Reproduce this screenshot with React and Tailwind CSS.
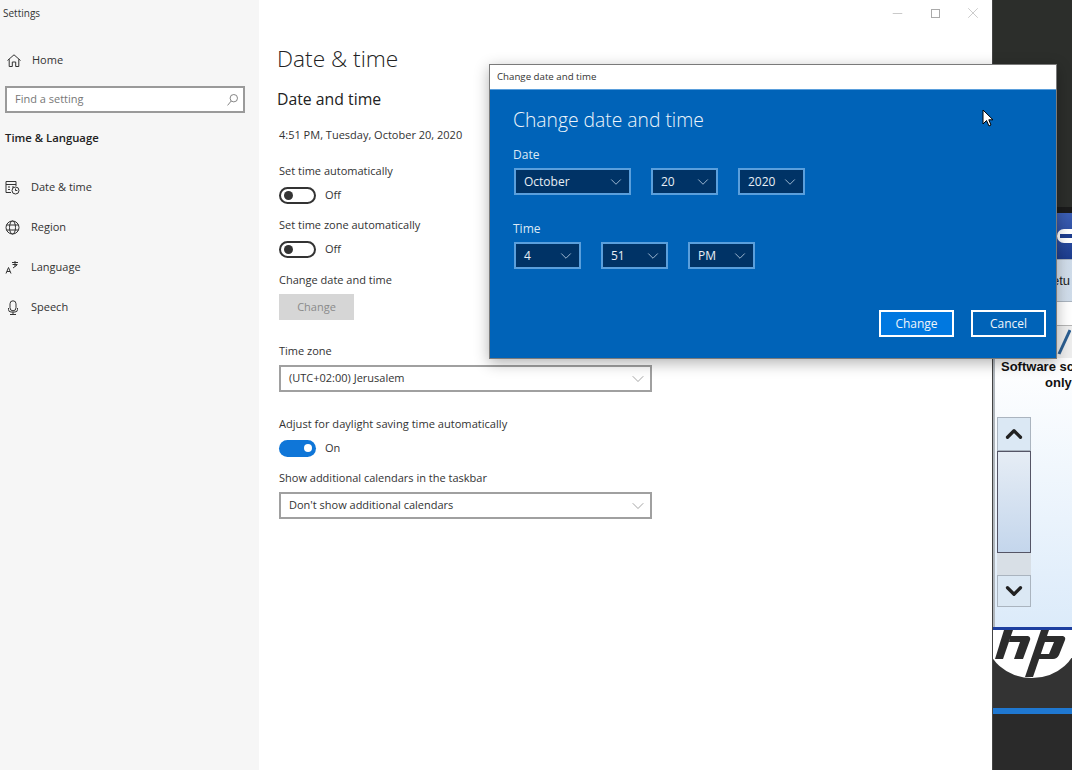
import React from "react";
import { ChevronDown, ChevronUp, Minus, X } from "lucide-react";

const font = "font-['Open_Sans','Liberation_Sans',sans-serif]";

function Toggle({ on, label }) {
  return (
    <div className="flex items-center gap-[9px] h-[18px]">
      <div className={on ? "w-[37px] h-[17px] rounded-full bg-[#0f76d8] flex items-center justify-end pr-[4px]" : "w-[37px] h-[17px] rounded-full border-2 border-[#333] flex items-center pl-[3px]"}>
        <div className={on ? "w-[8px] h-[8px] rounded-full bg-white" : "w-[9px] h-[9px] rounded-full bg-[#333]"} />
      </div>
      <span className="text-[11px] text-[#333]">{label}</span>
    </div>
  );
}

function Select({ text }) {
  return (
    <div className="w-[373px] h-[27px] border-2 border-[#a0a0a0] bg-white flex items-center justify-between pl-[8px] pr-[2px] text-[11px] text-[#333]">
      <span>{text}</span>
      <ChevronDown size={20} strokeWidth={0.8} className="text-[#777]" />
    </div>
  );
}

function NavItem({ icon, label, pad = "pl-[5px]" }) {
  return (
    <div className={`flex items-center h-[40px] ${pad} gap-[11px] text-[#333] text-[11px]`}>
      <span className="w-[15px] h-[15px] flex items-center justify-center">{icon}</span>
      <span>{label}</span>
    </div>
  );
}

function DSelect({ text, w }) {
  return (
    <div className={`${w} h-[27px] border-2 border-[#5a9fdc] bg-[#003366] flex items-center justify-between pl-[8px] pr-[4px] text-[12px] text-[#e8eef5]`}>
      <span>{text}</span>
      <ChevronDown size={18} strokeWidth={1} className="text-[#cfe0f0]" />
    </div>
  );
}

const ic = { fill: "none", stroke: "#333", strokeWidth: 1 };

export default function App() {
  return (
    <div className={`relative w-[1072px] h-[770px] overflow-hidden flex bg-white ${font}`}>
      {/* Sidebar */}
      <aside className="w-[259px] shrink-0 bg-[#f6f6f6] flex flex-col">
        <div className="h-[28px] pl-[3px] pt-[6px] text-[10px] text-[#333] leading-[15px]">Settings</div>
        <div className="mt-[12px]">
          <NavItem
            label="Home"
            pad="pl-[6px]"
            icon={
              <svg width="14" height="13" viewBox="0 0 14 13" {...ic}>
                <path d="M0.5 6.5 L7 0.8 L13.5 6.5 M2.2 5.2 V12.5 H5.3 V8 H8.7 V12.5 H11.8 V5.2" />
              </svg>
            }
          />
        </div>
        <div className="mx-[5px] mt-[6px] w-[240px] h-[27px] border-2 border-[#9a9a9a] bg-white flex items-center justify-between pl-[8px] pr-[5px] text-[11px] text-[#777]">
          <span>Find a setting</span>
          <svg width="11" height="12" viewBox="0 0 11 12" fill="none" stroke="#777" strokeWidth="0.9">
            <circle cx="6.8" cy="4.2" r="3.7" />
            <path d="M4.2 7 L0.6 11.4" />
          </svg>
        </div>
        <div className="pl-[5px] mt-[15px] h-[20px] leading-[20px] text-[11.3px] font-semibold text-[#222]">Time &amp; Language</div>
        <div className="mt-[19px]">
          <NavItem
            label="Date & time"
            icon={
              <svg width="15" height="15" viewBox="0 0 15 15" {...ic}>
                <path d="M6 12.5 H1 V1.5 H11 V6 M1 4.5 H11 M3 7 H5 M7 7 H9 M3 9.5 H5" />
                <circle cx="10.5" cy="10.5" r="3.5" />
                <path d="M10.5 8.5 V10.5 H12.3" />
              </svg>
            }
          />
          <NavItem
            label="Region"
            icon={
              <svg width="15" height="15" viewBox="0 0 15 15" {...ic}>
                <circle cx="7.5" cy="7.5" r="6.5" />
                <ellipse cx="7.5" cy="7.5" rx="3" ry="6.5" />
                <path d="M1.5 5 H13.5 M1.5 10 H13.5" />
              </svg>
            }
          />
          <NavItem
            label="Language"
            icon={
              <svg width="15" height="15" viewBox="0 0 15 15" {...ic}>
                <path d="M1 13.5 L3.5 7.5 L6 13.5 M2 11.5 H5 M7 2.5 H13 M10 1 V6.5 M7.5 4.5 H12.5 M8 8 L12 5" />
              </svg>
            }
          />
          <NavItem
            label="Speech"
            icon={
              <svg width="14" height="15" viewBox="0 0 14 15" {...ic}>
                <rect x="4" y="0.8" width="6" height="10" rx="3" />
                <path d="M2.5 8 V9.5 Q2.5 12 5 12 H9 Q11.5 12 11.5 9.5 V8 M7 12 V14.5 M4 14.5 H10" />
              </svg>
            }
          />
        </div>
      </aside>

      {/* Main */}
      <main className="w-[733px] shrink-0 bg-white relative pl-[18px] text-[#333]">
        <div className="absolute top-0 right-0 flex items-center text-[#aaa]">
          <div className="w-[38px] h-[26px] flex items-center justify-center"><Minus size={15} strokeWidth={1} /></div>
          <div className="w-[38px] h-[26px] flex items-center justify-center"><div className="w-[9px] h-[9px] border border-[#aaa]" /></div>
          <div className="w-[38px] h-[26px] flex items-center justify-center"><X size={18} strokeWidth={0.8} /></div>
        </div>
        <h1 className="mt-[42px] h-[34px] text-[22.7px] leading-[34px] font-light text-[#222]">Date &amp; time</h1>
        <h2 className="mt-[11px] h-[24px] text-[15.8px] leading-[24px] text-[#222]">Date and time</h2>
        <div className="ml-[2px] mt-[15px] h-[17px] text-[11px] leading-[17px]">4:51 PM, Tuesday, October 20, 2020</div>
        <div className="ml-[2px] flex flex-col text-[11px]">
          <div className="mt-[19px] h-[17px] leading-[17px]">Set time automatically</div>
          <div className="mt-[7px]"><Toggle label="Off" /></div>
          <div className="mt-[12px] h-[17px] leading-[17px]">Set time zone automatically</div>
          <div className="mt-[7px]"><Toggle label="Off" /></div>
          <div className="mt-[13px] h-[17px] leading-[17px]">Change date and time</div>
          <div className="mt-[6px] w-[75px] h-[26px] bg-[#d6d6d6] flex items-center justify-center text-[#8a8a8a]">Change</div>
          <div className="mt-[22px] h-[17px] leading-[17px]">Time zone</div>
          <div className="mt-[6px]"><Select text="(UTC+02:00) Jerusalem" /></div>
          <div className="mt-[23px] h-[17px] leading-[17px] text-[11.1px]">Adjust for daylight saving time automatically</div>
          <div className="mt-[7px]"><Toggle on label="On" /></div>
          <div className="mt-[12px] h-[17px] leading-[17px]">Show additional calendars in the taskbar</div>
          <div className="mt-[6px]"><Select text="Don't show additional calendars" /></div>
        </div>
      </main>

      {/* Background window */}
      <div className="w-[80px] shrink-0 flex flex-col overflow-hidden bg-[#2a2a2a] border-l border-[#444]">
        <div className="h-[207px] shrink-0 bg-[#2c2e2b]" />
        <div className="h-[6px] shrink-0 bg-[#1b1b1b]" />
        <div className="h-[46px] shrink-0 bg-gradient-to-b from-[#3c5fb4] to-[#1d3d8e] flex items-center justify-end">
          <div className="w-[15px] h-[14px] rounded-l-full bg-white flex items-center"><div className="w-[12px] h-[4px] ml-[3px] bg-[#1d3d8e]" /></div>
        </div>
        <div className="h-[43px] shrink-0 bg-gradient-to-r from-[#eef2f6] to-[#cfdcea] border-y border-[#aab4bf] flex items-center pl-[59px] text-[13px] text-[#222] font-['Liberation_Sans',sans-serif]">etu</div>
        <div className="h-[23px] shrink-0 bg-white" />
        <div className="h-[33px] shrink-0 bg-[#eeeeee] border-t border-[#b5b5b5] flex items-center justify-end pr-[1px]">
          <svg width="14" height="26" viewBox="0 0 14 26"><path d="M13 1 L2 25" stroke="#2c5f92" strokeWidth="3" fill="none" /></svg>
        </div>
        <div className="h-[269px] shrink-0 bg-gradient-to-b from-white to-[#dcebfa] border-l-2 border-[#b0b6bc] pt-[1px] flex flex-col font-['Liberation_Sans',sans-serif]">
          <div className="pl-[6px] text-[13px] leading-[16px] font-bold text-[#111] whitespace-nowrap">Software sc</div>
          <div className="pl-[50px] text-[13px] leading-[16px] font-bold text-[#111]">only</div>
          <div className="ml-[2px] mt-[26px] w-[34px] flex flex-col">
            <div className="h-[34px] border border-[#aab4bf] bg-[#dbe8f4] flex items-center justify-center">
              <ChevronUp size={26} strokeWidth={3} className="text-[#222]" />
            </div>
            <div className="h-[102px] border border-[#556] bg-gradient-to-b from-[#e6edf5] to-[#c4d6ec]" />
            <div className="h-[22px] bg-[#d8dfe6]" />
            <div className="h-[32px] border border-[#aab4bf] bg-[#dbe8f4] flex items-center justify-center">
              <ChevronDown size={26} strokeWidth={3} className="text-[#222]" />
            </div>
          </div>
        </div>
        <div className="h-[3px] shrink-0 bg-[#1d3fa0]" />
        <div className="h-[78px] shrink-0 bg-[#333] flex items-start">
          <svg width="79" height="48" viewBox="1 8 79 48">
            <ellipse cx="40" cy="15" rx="46" ry="41" fill="#fff" />
            <g fill="#2c2c2c">
              <path d="M12 8 H21 L11 37 H3 Z" />
              <path d="M18 14 H36 Q39 15 38 18 L31 37 H22 L28 20 H17 Z" />
              <path d="M49 8 H57 L41 55 H33 Z" />
              <path d="M53 14 H71 Q74 15 73 18 L67 33 Q65 37 61 37 H46 L48 32 H57 L62 20 H52 Z" />
            </g>
          </svg>
        </div>
        <div className="h-[6px] shrink-0 bg-[#1f78d1]" />
        <div className="flex-1 bg-[#2a2a2a]" />
      </div>

      {/* Dialog */}
      <div className="absolute left-[489px] top-[64px] w-[568px] h-[295px] flex flex-col border border-[#7a7a7a] shadow-[0_4px_14px_rgba(0,0,0,0.3)]">
        <div className="h-[25px] bg-white pl-[7px] text-[9.7px] leading-[24px] text-[#333] border-b border-[#5a9fdc]">Change date and time</div>
        <div className="flex-1 bg-[#0063b8] pl-[23px] flex flex-col text-white relative">
          <div className="mt-[15px] h-[30px] text-[19.3px] leading-[30px] font-light text-[#eef5fb]">Change date and time</div>
          <div className="mt-[11px] h-[17px] text-[12px] leading-[17px] text-[#dce9f5]">Date</div>
          <div className="mt-[5px] ml-[1px] flex gap-[20px]">
            <DSelect text="October" w="w-[117px]" />
            <DSelect text="20" w="w-[67px]" />
            <DSelect text="2020" w="w-[67px]" />
          </div>
          <div className="mt-[25px] h-[17px] text-[12px] leading-[17px] text-[#dce9f5]">Time</div>
          <div className="mt-[5px] ml-[1px] flex gap-[20px]">
            <DSelect text="4" w="w-[67px]" />
            <DSelect text="51" w="w-[67px]" />
            <DSelect text="PM" w="w-[67px]" />
          </div>
          <div className="absolute right-[10px] bottom-[21px] flex gap-[17px] text-[12px] text-[#f0f5fa]">
            <div className="w-[75px] h-[27px] border-2 border-white bg-[#0078e0] flex items-center justify-center">Change</div>
            <div className="w-[75px] h-[27px] border-2 border-white flex items-center justify-center">Cancel</div>
          </div>
          {/* cursor */}
          <svg className="absolute left-[492px] top-[19px]" width="12" height="18" viewBox="0 0 12 18">
            <path d="M1 1 V15 L4.5 11.5 L7 17 L9 16 L6.8 10.8 H11 Z" fill="#fff" stroke="#000" strokeWidth="1" />
          </svg>
        </div>
      </div>
    </div>
  );
}
